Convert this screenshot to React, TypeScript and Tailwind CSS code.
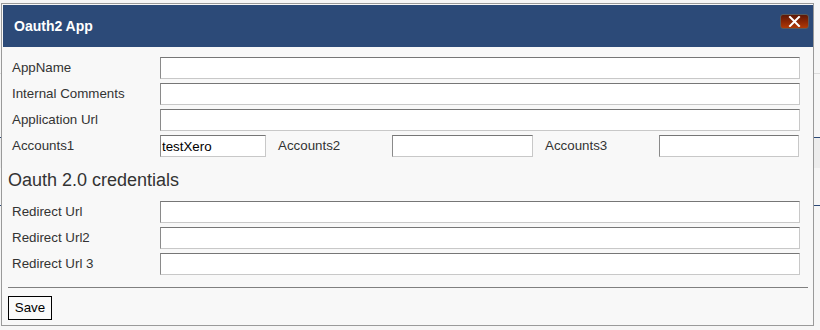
import React from "react";

const inputCls =
  "h-[22px] bg-white border border-t-[#767676] border-l-[#8a8a8a] border-r-[#c8c8c8] border-b-[#c8c8c8] px-[1px] text-[13.33px] text-black outline-none";

function Row({ label, value = "" }: { label: string; value?: string }) {
  return (
    <div className="flex items-center h-[22px]">
      <div className="w-[148px] text-[13.33px] text-[#333]">{label}</div>
      <input className={`${inputCls} w-[640px]`} defaultValue={value} />
    </div>
  );
}

export default function App() {
  return (
    <div
      className="relative w-[820px] h-[330px] overflow-hidden bg-[#f6f6f6]"
      style={{ fontFamily: '"Liberation Sans", Arial, sans-serif' }}
    >
      {/* background page */}
      <div className="flex flex-col">
        <div className="h-[73px]" />
        <div className="h-px bg-[#dcdcdc]" />
        <div className="h-[63px]" />
        <div className="h-px bg-[#2c4a78]" />
        <div className="h-[30px] bg-[#ededed]" />
        <div className="h-[37px]" />
        <div className="h-px bg-[#2c4a78]" />
      </div>

      {/* dialog */}
      <div className="absolute left-[1px] top-[3px] w-[813px] h-[323px] border border-[#9a9a9a] bg-[#f8f8f8] pt-[1px] pl-[1px] flex flex-col">
        <div className="h-[42px] w-[810px] bg-[#2c4a78] flex items-center justify-between pl-[11px] pr-[4px]">
          <span className="text-white font-bold text-[14px]">Oauth2 App</span>
          <button className="self-start mt-[9px] w-[29px] h-[15px] rounded-[3px] border border-[#5a5a5a] bg-gradient-to-b from-[#5e1806] via-[#8a2604] to-[#b03a06] flex items-center justify-center">
            <svg width="13" height="11" viewBox="0 0 13 11">
              <path d="M2 1 L11 10 M11 1 L2 10" stroke="white" strokeWidth="2" strokeLinecap="square" />
            </svg>
          </button>
        </div>

        <div className="flex flex-col pl-[5px] pt-[10px]">
          <div className="flex flex-col gap-[4px] pl-[4px]">
            <Row label="AppName" />
            <Row label="Internal Comments" />
            <Row label="Application Url" />
            <div className="flex items-center h-[22px] text-[13.33px] text-[#333]">
              <div className="w-[148px]">Accounts1</div>
              <input className={`${inputCls} w-[106px]`} defaultValue="testXero" />
              <div className="w-[114px] ml-[12px]">Accounts2</div>
              <input className={`${inputCls} w-[141px]`} />
              <div className="w-[114px] ml-[12px]">Accounts3</div>
              <input className={`${inputCls} w-[140px]`} />
            </div>
          </div>

          <div className="text-[18px] leading-[20px] text-[#333] mt-[13px]">Oauth 2.0 credentials</div>

          <div className="flex flex-col gap-[4px] pl-[4px] mt-[11px]">
            <Row label="Redirect Url" />
            <Row label="Redirect Url2" />
            <Row label="Redirect Url 3" />
          </div>

          <div className="h-px w-[800px] bg-[#808080] mt-[12px]" />

          <div className="mt-[8px]">
            <button className="w-[44px] h-[24px] border border-black bg-[#fafafa] text-[13.33px] text-black flex items-center justify-center">
              Save
            </button>
          </div>
        </div>
      </div>
    </div>
  );
}
